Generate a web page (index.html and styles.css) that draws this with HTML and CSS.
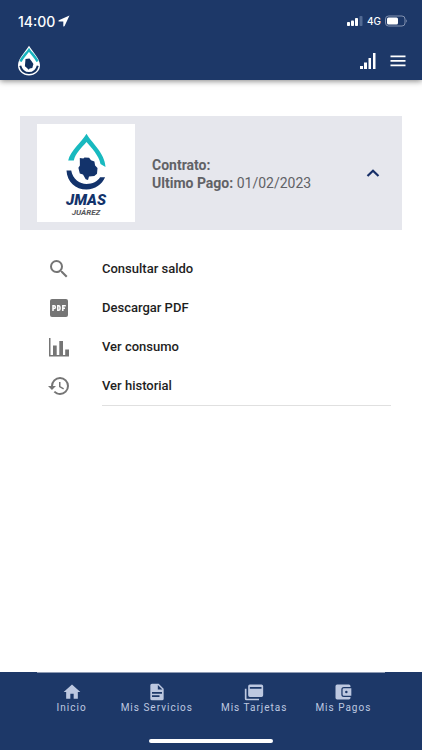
FILE: index.html
```html
<!DOCTYPE html>
<html lang="es">
<head>
    <meta charset="UTF-8">
    <meta name="viewport" content="width=device-width, initial-scale=1.0">
    <title>JMAS Juárez</title>
    <link rel="stylesheet" href="styles.css">
</head>
<body>
    <header class="top">
        <div class="status">
            <span class="clock">14:00</span>
            <svg class="location" width="12" height="12" viewBox="0 0 12 12"><path fill="#fff" d="M11.5.5.8 5.200c-.6.4-.4 1.400.3 1.400h4.200v4.300c0 .7 1 .8 1.300.1z"/></svg>
            <div class="status-right">
                <svg width="16" height="10" viewBox="0 0 16 10">
                    <g fill="#fff"><rect x="0" y="6" width="3" height="4" rx=".8"/><rect x="4" y="4.500" width="3" height="5.500" rx=".8"/><rect x="8" y="2" width="3" height="8" rx=".8"/></g>
                    <rect x="12.500" y="0" width="3" height="10" rx=".8" fill="#526a93"/>
                </svg>
                <span class="network">4G</span>
                <svg width="23" height="12" viewBox="0 0 23 12">
                    <rect x=".5" y="1" width="19.500" height="10" rx="3" fill="none" stroke="#8291b0"/>
                    <rect x="2" y="2.500" width="11" height="7" rx="1.500" fill="#fff"/>
                    <path d="M21.300 4.500c1 .5 1 2.500 0 3z" fill="#8291b0"/>
                </svg>
            </div>
        </div>
        <div class="toolbar">
            <svg class="brand" width="24" height="32" viewBox="0 0 24 32">
                <path fill="#fff" d="M12 .8C9 6 1 13.500 1 20.300c0 6 5 10.200 11 10.200s11-4.200 11-10.200C23 13.500 15 6 12 .8z"/>
                <path fill="none" stroke="#18b4bf" stroke-width="2.400" d="M3.500 16.500C5.500 12 9.500 8.500 12 4.800c2.500 3.700 6.500 7.200 8.500 11.700"/>
                <path fill="none" stroke="#12305f" stroke-width="2" d="M3.200 20.700C4.500 25.700 8 28 12 28s7.500-2.300 8.800-7.300"/>
                <path fill="#12305f" d="m8.500 14 4-.6 2.300 3 1.600 2.500-1.100 4-2.600.5-1 1.300-2-1.900-1.800-1.500z"/>
            </svg>
            <div class="toolbar-actions">
                <button class="icon-button" type="button" aria-label="Señal">
                    <svg width="18" height="18" viewBox="0 0 18 18" fill="#fff"><rect x="1" y="14" width="3" height="3"/><rect x="5" y="10.500" width="3" height="6.500"/><rect x="9.500" y="6" width="2.500" height="11"/><rect x="14" y="1" width="2.500" height="16"/></svg>
                </button>
                <button class="icon-button" type="button" aria-label="Menú">
                    <svg width="18" height="18" viewBox="0 0 18 18" fill="#fff"><path d="M1.500 3.500h15v1.700h-15zM1.500 8h15v1.700h-15zM1.500 12.500h15v1.700h-15z"/></svg>
                </button>
            </div>
        </div>
    </header>

    <main class="content">
        <section class="card">
            <div class="logo">
                <svg width="40" height="58" viewBox="0 0 40 58">
                    <path fill="#18b9bf" d="M20.500.8C25 9 39 20 39.500 34L34.500 31C33 22.500 25.500 15 20.500 9 15.500 15 9.500 20 7.800 27.500H2.200C4 18 16 9 20.500.8z"/>
                    <path fill="#13336b" d="M.5 37.500h4.700c1.500 8.500 8.500 13.500 15.300 13.500 6 0 11-2.500 13.600-6.700h5C36 51.500 29 56.500 20.500 56.500 9.500 56.500 1 49 .5 37.500z"/>
                    <path fill="#13336b" d="m13.800 25 3.500.4 1.200-1 4.600.4 1.900 2.400 3.400 1.200.7 4 2.400 2.500-.5 5.800-2.700 2.200-5.300.7-1 3.400-2.300-.8-2.700-4.600-3.200-1.200-1.400-5.600 1.500-2.200z"/>
                </svg>
                <span class="logo-name">JMAS</span>
                <span class="logo-city">JUÁREZ</span>
            </div>
            <div class="account">
                <div><b>Contrato:</b></div>
                <div><b>Ultimo Pago:</b> 01/02/2023</div>
            </div>
            <button class="icon-button" type="button" aria-label="Contraer" aria-expanded="true">
                <svg width="18" height="18" viewBox="0 0 18 18"><path d="m3.500 12 5.500-5.300 5.500 5.300" fill="none" stroke="#172f68" stroke-width="2.200"/></svg>
            </button>
        </section>

        <nav class="options">
            <a class="option" href="#saldo">
                <svg width="24" height="24" viewBox="0 0 24 24"><path d="M15.500 14h-.79l-.28-.27A6.470 6.470 0 0 0 16 9.500 6.500 6.500 0 1 0 9.500 16c1.610 0 3.090-.59 4.230-1.570l.27.28v.79l5 4.990L20.490 19zm-6 0a4.500 4.500 0 1 1 0-9 4.500 4.500 0 0 1 0 9z"/></svg>
                <span>Consultar saldo</span>
            </a>
            <a class="option" href="#pdf">
                <svg width="24" height="24" viewBox="0 0 24 24"><rect x="3" y="3" width="18" height="18" rx="2"/><path fill="none" stroke="#fff" stroke-width="1.500" d="M6 15v-5.200h1q1.400 0 1.400 1.400t-1.400 1.400H6M10.800 14.300V9.800h.8q1.400 0 1.400 1.400v1.700q0 1.400-1.400 1.400zM15.800 15V9.800h3M15.800 12.300h2.200"/></svg>
                <span>Descargar PDF</span>
            </a>
            <a class="option" href="#consumo">
                <svg width="24" height="24" viewBox="0 0 24 24"><path d="M2 3h1.500v17H6v-9.500h3.700V20h2.600V6H16v14h2.200v-5.500H22V21.500H2z"/></svg>
                <span>Ver consumo</span>
            </a>
            <a class="option" href="#historial">
                <svg width="24" height="24" viewBox="0 0 24 24"><path d="M13.500 8H12v5l4.280 2.540.72-1.210-3.500-2.080zM13 3a9 9 0 0 0-9 9H1l3.960 4.030L9 12H6a7 7 0 1 1 7 7c-1.930 0-3.680-.79-4.940-2.060l-1.420 1.420A8.900 8.900 0 0 0 13 21a9 9 0 0 0 0-18"/></svg>
                <span>Ver historial</span>
            </a>
            <hr class="divider">
        </nav>
    </main>

    <footer class="bottom">
        <nav class="tabs">
            <a class="tab" href="#inicio">
                <svg width="20" height="20" viewBox="0 0 24 24"><path d="M10 20v-6h4v6h5v-8h3L12 3 2 12h3v8z"/></svg>
                <span>Inicio</span>
            </a>
            <a class="tab" href="#servicios">
                <svg width="20" height="20" viewBox="0 0 24 24"><path d="M13 9h5.500L13 3.500zM6 2h8l6 6v12a2 2 0 0 1-2 2H6a2 2 0 0 1-2-2V4a2 2 0 0 1 2-2m9 16v-2H6v2zm3-4v-2H6v2z"/></svg>
                <span>Mis Servicios</span>
            </a>
            <a class="tab" href="#tarjetas">
                <svg width="20" height="20" viewBox="0 0 24 24"><path fill-rule="evenodd" d="M7 3h14a2 2 0 0 1 2 2v11a2 2 0 0 1-2 2H7a2 2 0 0 1-2-2V5a2 2 0 0 1 2-2zm0 3v2h14V6zM1 8h2v12h15v2H3a2 2 0 0 1-2-2z"/></svg>
                <span>Mis Tarjetas</span>
            </a>
            <a class="tab" href="#pagos">
                <svg width="20" height="20" viewBox="0 0 24 24"><path fill-rule="evenodd" d="M5 3h14a2 2 0 0 1 2 2v1h-8a3 3 0 0 0-3 3v6a3 3 0 0 0 3 3h8v1a2 2 0 0 1-2 2H5a2 2 0 0 1-2-2V5a2 2 0 0 1 2-2zm8 4.500h9v9h-9a1.500 1.500 0 0 1-1.500-1.500V9A1.500 1.500 0 0 1 13 7.500zm3 3a1.500 1.500 0 1 0 0 3 1.500 1.500 0 0 0 0-3z"/></svg>
                <span>Mis Pagos</span>
            </a>
        </nav>
        <div class="home-bar"></div>
    </footer>
</body>
</html>
```

FILE: styles.css
```css
* {
    box-sizing: border-box;
}
body {
    margin: 0;
    min-height: 100vh;
    display: flex;
    flex-direction: column;
    background: #fff;
    color: #1e1e1e;
    font-family: Roboto, sans-serif;
}
a {
    color: inherit;
    text-decoration: none;
}
svg {
    display: block;
    flex-shrink: 0;
}
.top {
    background: #1d3868;
    color: #fff;
    box-shadow: 0 1px 6px rgba(0, 0, 0, 0.5);
}
.status {
    display: flex;
    align-items: center;
    height: 42px;
    padding: 0 14px 0 18px;
    gap: 3px;
    font-family: Inter, sans-serif;
}
.clock {
    font-size: 14px;
    font-weight: 500;
}
.status-right {
    display: flex;
    align-items: center;
    gap: 4px;
    margin-left: auto;
}
.network {
    font-size: 10px;
    font-weight: 500;
}
.toolbar {
    display: flex;
    align-items: center;
    justify-content: space-between;
    height: 38px;
    padding: 0 15px 0 17px;
}
.toolbar-actions {
    display: flex;
    gap: 12px;
}
.icon-button {
    padding: 0;
    border: 0;
    background: none;
    cursor: pointer;
}
.content {
    flex: 1;
    padding: 36px 20px;
}
.card {
    display: flex;
    align-items: center;
    padding: 8px 20px 8px 17px;
    background: #e6e7ed;
}
.logo {
    display: flex;
    flex-direction: column;
    align-items: center;
    width: 98px;
    height: 98px;
    padding-top: 9px;
    background: #fff;
    font-style: italic;
    font-weight: 900;
}
.logo-name {
    color: #13336b;
    font-size: 15px;
    line-height: 18px;
}
.logo-city {
    color: #55565a;
    font-size: 8px;
    line-height: 8px;
    font-weight: 700;
}
.account {
    flex: 1;
    padding: 2px 0 0 17px;
    color: #616266;
    font-size: 14px;
    line-height: 18px;
}
.options {
    padding: 19px 11px 0 27px;
}
.option {
    display: flex;
    align-items: center;
    height: 39px;
    gap: 31px;
    font-size: 13px;
    font-weight: 500;
}
.option svg {
    fill: #757575;
}
.divider {
    height: 1px;
    margin: 0 0 0 55px;
    border: 0;
    background: #e0e0e0;
}
.bottom {
    background: #1d3868;
}
.tabs {
    display: flex;
    width: fit-content;
    margin: 0 auto;
    padding-top: 9px;
    border-top: 1px solid #8d9ab3;
}
.tab {
    display: flex;
    flex-direction: column;
    align-items: center;
    min-width: 70px;
    padding: 0 14px;
    color: #bdc8e0;
    font-size: 10px;
    line-height: 12px;
    letter-spacing: 1px;
}
.tab svg {
    fill: currentColor;
}
.home-bar {
    width: 124px;
    height: 4px;
    margin: 25px auto 7px;
    border-radius: 2px;
    background: #fff;
}
```
